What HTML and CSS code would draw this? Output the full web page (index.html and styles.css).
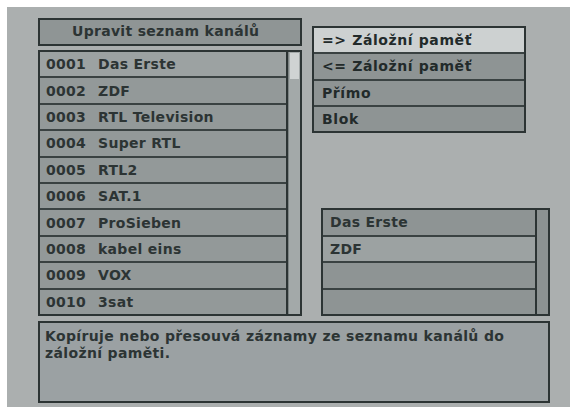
FILE: index.html
```html
<!DOCTYPE html>
<html lang="cs">
<head>
<meta charset="utf-8">
<title>Upravit seznam kanálů</title>
<link rel="stylesheet" href="styles.css">
</head>
<body>
<div class="panel">
  <div class="top">
    <div class="left">
      <div class="title">Upravit seznam kanálů</div>
      <div class="list">
        <div class="rows">
          <div class="row cur"><span class="num">0001</span><span>Das Erste</span></div>
          <div class="row"><span class="num">0002</span><span>ZDF</span></div>
          <div class="row"><span class="num">0003</span><span>RTL Television</span></div>
          <div class="row"><span class="num">0004</span><span>Super RTL</span></div>
          <div class="row"><span class="num">0005</span><span>RTL2</span></div>
          <div class="row"><span class="num">0006</span><span>SAT.1</span></div>
          <div class="row"><span class="num">0007</span><span>ProSieben</span></div>
          <div class="row"><span class="num">0008</span><span>kabel eins</span></div>
          <div class="row"><span class="num">0009</span><span>VOX</span></div>
          <div class="row"><span class="num">0010</span><span>3sat</span></div>
        </div>
        <div class="scroll"><div class="thumb"></div></div>
      </div>
    </div>
    <div class="right">
      <div class="menu">
        <div class="mitem active">=&gt; Záložní paměť</div>
        <div class="mitem">&lt;= Záložní paměť</div>
        <div class="mitem">Přímo</div>
        <div class="mitem">Blok</div>
      </div>
      <div class="buffer">
        <div class="brows">
          <div class="brow dark">Das Erste</div>
          <div class="brow">ZDF</div>
          <div class="brow dark"></div>
          <div class="brow dark"></div>
        </div>
        <div class="bscroll"></div>
      </div>
    </div>
  </div>
  <div class="desc">Kopíruje nebo přesouvá záznamy ze seznamu kanálů do záložní paměti.</div>
</div>
</body>
</html>
```
FILE: styles.css
```css
html, body {
  margin: 0;
  padding: 0;
  background: #ffffff;
}
body {
  font-family: "DejaVu Sans", "Liberation Sans", sans-serif;
  font-size: 14px;
  font-weight: bold;
  color: #2c3434;
  width: 576px;
  height: 407px;
  overflow: hidden;
}
.panel {
  margin: 7px 0 0 7px;
  width: 563px;
  height: 400px;
  box-sizing: border-box;
  background: #abafaf;
  padding: 11px 0 0 31px;
}
.top {
  display: flex;
  height: 298px;
}
.left {
  width: 264px;
  display: flex;
  flex-direction: column;
  gap: 4px;
}
.title {
  height: 28px;
  box-sizing: border-box;
  border: 2px solid #2c3434;
  background: #8f9595;
  padding-left: 32px;
  line-height: 23px;
  letter-spacing: 0.3px;
}
.list {
  height: 266px;
  box-sizing: border-box;
  border: 2px solid #2c3434;
  display: flex;
}
.rows {
  flex: 1;
  display: flex;
  flex-direction: column;
  border-right: 2px solid #2c3434;
}
.row {
  flex: 1;
  display: flex;
  align-items: center;
  padding-left: 6px;
  background: #939999;
  border-bottom: 2px solid #3a4242;
  letter-spacing: 0.3px;
}
.row:last-child {
  border-bottom: none;
}
.row.cur {
  background: #9ca2a2;
}
.num {
  width: 52px;
}
.scroll {
  width: 11px;
  background: #a3a9a9;
  border-left: 1px solid #7d8484;
}
.thumb {
  height: 26px;
  margin: 1px 1px 0 1px;
  background: #cfd3d3;
}
.right {
  margin-left: 10px;
  padding-top: 8px;
  display: flex;
  flex-direction: column;
}
.menu {
  width: 214px;
  height: 107px;
  box-sizing: border-box;
  border: 2px solid #2c3434;
  display: flex;
  flex-direction: column;
}
.mitem {
  flex: 1;
  display: flex;
  align-items: center;
  padding-left: 8px;
  background: #8e9494;
  border-bottom: 2px solid #3a4242;
  letter-spacing: 0.6px;
  color: #222a2a;
}
.mitem:last-child {
  border-bottom: none;
}
.mitem.active {
  background: #cdd1d1;
}
.buffer {
  margin-top: auto;
  margin-left: 9px;
  width: 229px;
  height: 108px;
  box-sizing: border-box;
  border: 2px solid #2c3434;
  display: flex;
}
.brows {
  flex: 1;
  display: flex;
  flex-direction: column;
  border-right: 2px solid #2c3434;
}
.brow {
  flex: 1;
  display: flex;
  align-items: center;
  padding-left: 7px;
  background: #9ca2a2;
  border-bottom: 2px solid #3a4242;
  letter-spacing: 0.3px;
}
.brow.dark {
  background: #8e9494;
}
.brow:last-child {
  border-bottom: none;
}
.bscroll {
  width: 11px;
  background: #8c9292;
}
.desc {
  margin-top: 5px;
  width: 512px;
  height: 82px;
  box-sizing: border-box;
  border: 2px solid #2c3434;
  background: #9ba1a3;
  padding: 5px 5px;
  line-height: 16.5px;
  letter-spacing: 0.35px;
}
```
